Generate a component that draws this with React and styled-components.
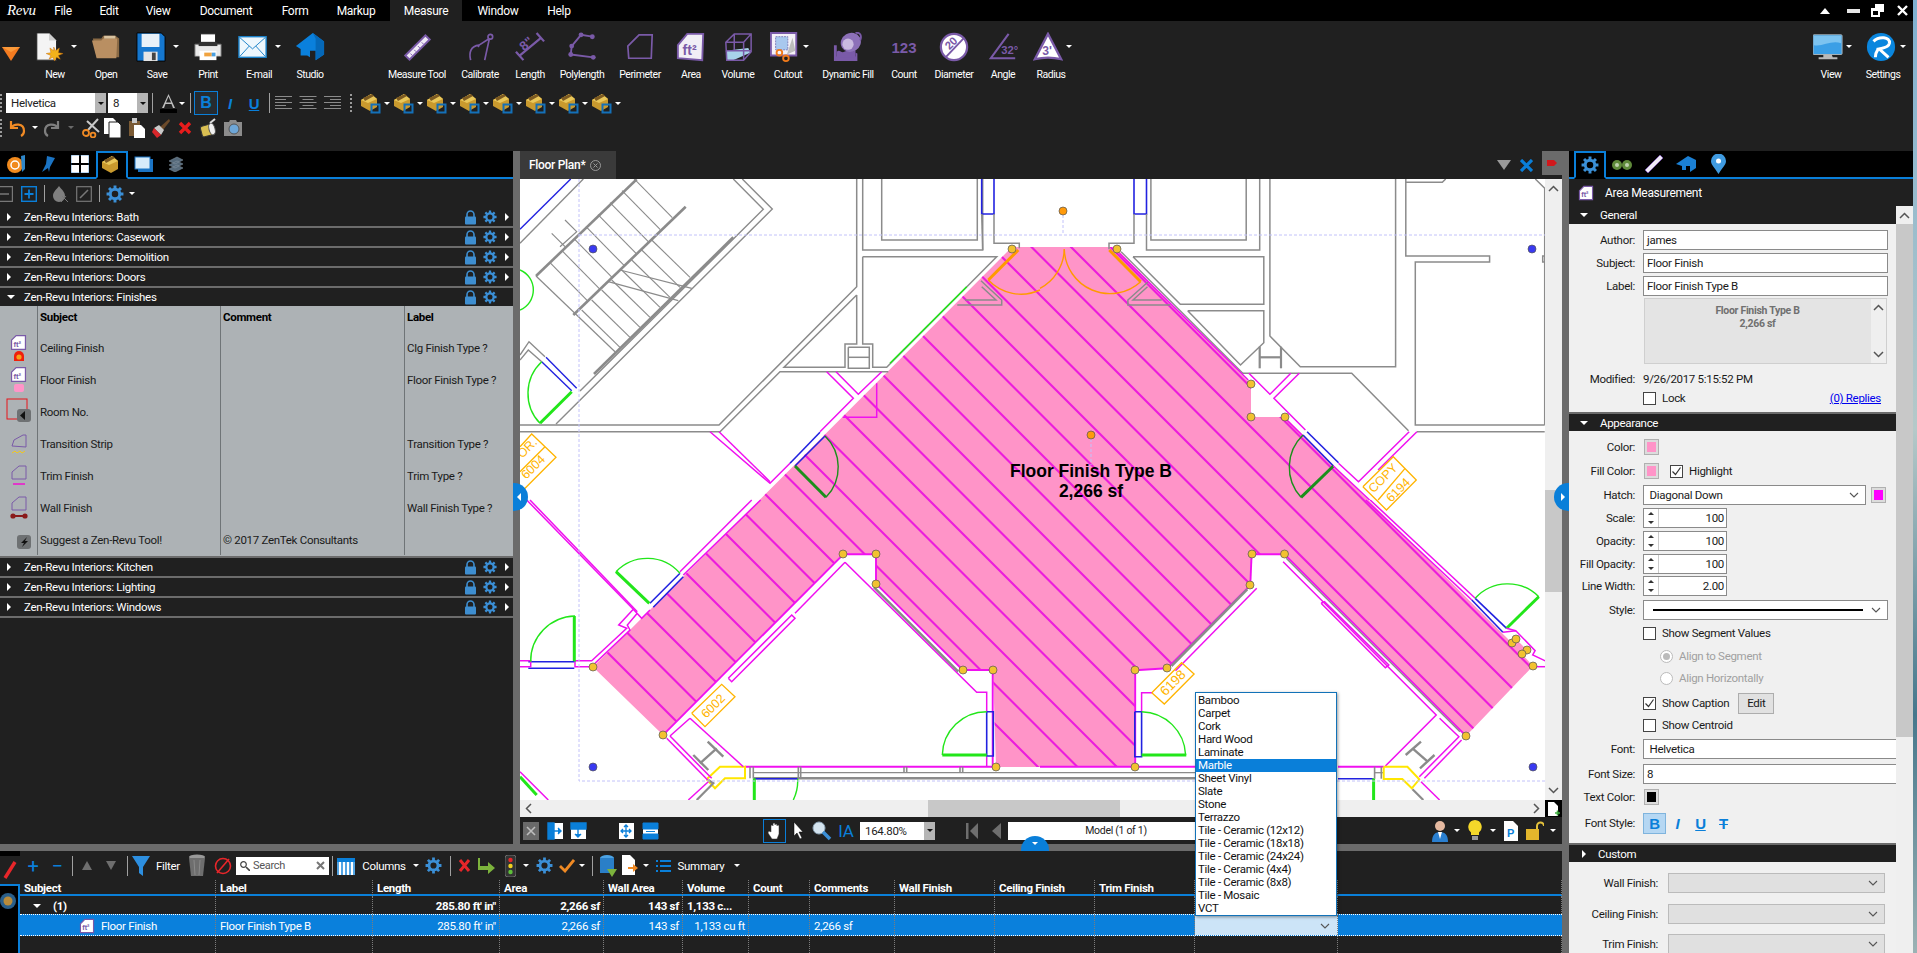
import React from "react";
import styled, { createGlobalStyle } from "styled-components";

const BLUE = "#0a7fd9";
const PURPLE = "#7a5aa8";
const DARK = "#202020";

const GlobalStyle = createGlobalStyle`
  html, body { margin: 0; padding: 0; overflow: hidden; background: #8fb6c9; }
  * { box-sizing: border-box; }
  body { font-family: Roboto, "Liberation Sans", sans-serif; font-size: 11.5px; letter-spacing: -0.3px; }
  svg text { letter-spacing: 0; }
`;

/* ---------- icons ---------- */
const Svg = ({ s, h, vb, children }) => (
  <svg
    width={s || 30}
    height={h || s || 30}
    viewBox={vb || (s ? `0 0 ${s} ${h || s}` : "0 0 32 32")}
    style={{ display: "block", flex: "none" }}
  >
    {children}
  </svg>
);

const Gear = ({ s = 16, c = "#3b8fd6" }) => (
  <Svg s={s} vb="0 0 16 16">
    <circle cx="8" cy="8" r="4.2" fill="none" stroke={c} strokeWidth="2.6" />
    <g stroke={c} strokeWidth="2.6">
      <path d="M8 0.5v3M8 12.5v3M0.5 8h3M12.5 8h3M2.7 2.7l2.1 2.1M11.2 11.2l2.1 2.1M2.7 13.3l2.1-2.1M11.2 4.8l2.1-2.1" />
    </g>
  </Svg>
);
const Lock = () => (
  <Svg s={13} h={15} vb="0 0 13 15">
    <path d="M3 7V4.5a3.5 3.5 0 0 1 7 0V7" fill="none" stroke="#3e8ed0" strokeWidth="1.6" />
    <rect x="1" y="6.5" width="11" height="8" rx="1" fill="#3e8ed0" />
  </Svg>
);
const Chest = ({ square = true }) => (
  <Svg s={22} h={22} vb="0 0 22 22">
    <path d="M1 8l10-6 6 5v8l-7 4-9-5z" fill="#c99a2e" />
    <path d="M1 8l10-6 6 5-9 4z" fill="#e9c75a" />
    <path d="M3 6l9-4 2 2-9 5z" fill="#7c5a22" />
    {square && <rect x="11.5" y="12.5" width="8" height="8" fill="none" stroke="#1470b8" strokeWidth="2" />}
  </Svg>
);
const Chevron = ({ c = "#555" }) => (
  <Svg s={10} h={6} vb="0 0 10 6">
    <path d="M1 1l4 4 4-4" fill="none" stroke={c} strokeWidth="1.1" />
  </Svg>
);
const FtIcon = ({ s = 20 }) => (
  <Svg s={s} vb="0 0 22 22">
    <path d="M2 8l6-6h12v18H2z" fill="#fff" stroke={PURPLE} strokeWidth="1.6" />
    <text x="4.5" y="17" fontSize="10" fontWeight="700" fill={PURPLE} fontFamily="Liberation Sans">ft²</text>
  </Svg>
);

const ribbonIcons = {
  New: (
    <Svg>
      <path d="M3 1h13l8 8v21H3z" fill="#f4f4f4" stroke="#222" />
      <path d="M16 1l8 8h-8z" fill="#cfcfcf" />
      <path d="M21 16l2 4 4-3-1 5 5 1-5 2 2 4-4-2-2 4-2-4-4 2 2-4-5-2 5-1-1-5 4 3z" fill="#f4b21a" stroke="#c86c08" strokeWidth=".5" />
    </Svg>
  ),
  Open: (
    <Svg>
      <path d="M2 7h9l2-3h13l4 3v20H6z" fill="#8a6a45" />
      <path d="M1 9h10l2-2h15l-1 21H6z" fill="#b98f62" />
      <path d="M14 4h12v3H14z" fill="#d9c3a0" />
    </Svg>
  ),
  Save: (
    <Svg>
      <path d="M1 1h26l4 4v26H1z" fill="#1577cf" stroke="#000" />
      <rect x="6" y="2" width="19" height="14" fill="#e9f1f8" />
      <rect x="8" y="21" width="15" height="10" fill="#e6e6e6" />
      <rect x="17" y="22" width="4" height="8" fill="#444" />
    </Svg>
  ),
  Print: (
    <Svg>
      <rect x="8" y="2" width="16" height="9" fill="#fff" stroke="#222" />
      <path d="M2 13h28v13H2z" fill="#e9e9e9" stroke="#666" />
      <rect x="6" y="11" width="20" height="4" fill="#333" />
      <rect x="7" y="20" width="18" height="10" fill="#fff" />
      <rect x="12" y="22" width="8" height="4" fill="#f0a340" />
      <rect x="20" y="22" width="4" height="4" fill="#4a9fe0" />
    </Svg>
  ),
  "E-mail": (
    <Svg>
      <rect x="1" y="5" width="29" height="22" fill="#eef7fd" stroke="#1a80c8" strokeWidth="1.5" />
      <path d="M2 6l13.5 12L29 6M2 26l10-11M29 26L19 15" fill="none" stroke="#1a80c8" />
    </Svg>
  ),
  Studio: (
    <Svg>
      <path d="M1 15L19 1l12 9v14l-9 6V20h-6v7l-3-2H6v-7z" fill="#0a80dc" />
      <path d="M19 1l12 9v14l-9 6V7z" fill="#0568b8" />
    </Svg>
  ),
  "Measure Tool": (
    <Svg>
      <path d="M2 25L25 2l6 6L8 31z" fill={PURPLE} />
      <path d="M5 25L25 5l3 3L8 28z" fill="#efeaf6" />
      <path d="M9 23l2 2M13 19l2 2M17 15l2 2M21 11l2 2" stroke={PURPLE} />
    </Svg>
  ),
  Calibrate: (
    <Svg>
      <g fill="none" stroke={PURPLE} strokeWidth="1.8">
        <circle cx="27" cy="5" r="2.5" />
        <path d="M26 7L15 14M26 7l-5 23M15 14C6 15 4 22 6 30M15 14l-1 2" />
      </g>
    </Svg>
  ),
  Length: (
    <Svg>
      <g stroke={PURPLE} strokeWidth="2.4" fill="none">
        <path d="M4 26L28 6M1 21l8 9M23 1l8 9" />
      </g>
      <text x="6" y="17" fontSize="14" fontWeight="700" fill={PURPLE} transform="rotate(-40 13 14)" fontFamily="Liberation Sans">8"</text>
    </Svg>
  ),
  Polylength: (
    <Svg>
      <path d="M4 24L5 15 15 3 27 5M4 24l24 3M27 5l1 0" fill="none" stroke={PURPLE} strokeWidth="2" />
      <g fill={PURPLE}>
        <circle cx="15" cy="3" r="2.6" /><circle cx="27" cy="5" r="2.6" /><circle cx="5" cy="15" r="2.6" />
        <circle cx="4" cy="24" r="2.6" /><circle cx="28" cy="27" r="2.6" />
      </g>
    </Svg>
  ),
  Perimeter: (
    <Svg>
      <path d="M3 15L15 3h14l-1 25H4z" fill="none" stroke={PURPLE} strokeWidth="1.8" />
    </Svg>
  ),
  Area: (
    <Svg>
      <path d="M2 14L12 2h17l-1 28L2 28z" fill="#f1eef6" stroke={PURPLE} strokeWidth="2" />
      <text x="7" y="25" fontSize="15" fontWeight="700" fill={PURPLE} fontFamily="Liberation Sans">ft²</text>
    </Svg>
  ),
  Volume: (
    <Svg>
      <path d="M3 20l24-3 2 5-20 9-5-1z" fill="#a8d3ea" />
      <path d="M3 11L12 2h18v19l-8 9H4zM3 11h19v19M22 11l8-9M12 2v18H4M12 20h18" fill="none" stroke={PURPLE} strokeWidth="1.6" />
    </Svg>
  ),
  Cutout: (
    <Svg>
      <path d="M1 1h27v24H1z" fill="#f4f1f8" stroke={PURPLE} strokeWidth="2" />
      <rect x="6" y="5" width="13" height="14" fill="#a8c8ee" stroke="#7a7ab8" strokeDasharray="2 1" />
      <path d="M18 24l6-18 3 14z" fill="#bdbdbd" />
      <circle cx="10" cy="22" r="3" fill="none" stroke="#f07a1a" strokeWidth="2" />
      <circle cx="17" cy="28" r="3" fill="none" stroke="#f07a1a" strokeWidth="2" />
    </Svg>
  ),
  "Dynamic Fill": (
    <Svg>
      <path d="M1 14h3v12h20v-4l2 1v8H1z" fill={PURPLE} />
      <path d="M4 21c3-3 5 2 8 0s5 1 12-1v7H4z" fill={PURPLE} />
      <ellipse cx="19" cy="11" rx="11" ry="10" fill="#8c70b8" transform="rotate(-30 19 11)" />
      <ellipse cx="16" cy="13" rx="6" ry="6" fill="#c9badf" />
      <path d="M24 1c5-1 7 3 5 8" fill="none" stroke={PURPLE} strokeWidth="2" />
    </Svg>
  ),
  Count: (
    <Svg>
      <text x="16" y="22" textAnchor="middle" fontSize="16" fontWeight="700" letterSpacing="1.5" fill={PURPLE} fontFamily="Liberation Sans">123</text>
    </Svg>
  ),
  Diameter: (
    <Svg>
      <circle cx="16" cy="16" r="14" fill="#fff" stroke={PURPLE} strokeWidth="2.4" />
      <path d="M7 27L27 6" stroke={PURPLE} strokeWidth="2" />
      <text x="13" y="16" textAnchor="middle" fontSize="12" fontWeight="700" fill={PURPLE} transform="rotate(-45 13 12)" fontFamily="Liberation Sans">20</text>
    </Svg>
  ),
  Angle: (
    <Svg>
      <path d="M22 2L3 28h26" fill="none" stroke={PURPLE} strokeWidth="2.2" />
      <text x="14" y="23" fontSize="12" fontWeight="700" fill={PURPLE} fontFamily="Liberation Sans">32°</text>
    </Svg>
  ),
  Radius: (
    <Svg>
      <path d="M16 2L2 29c8-2 20-2 28 0z" fill="#fff" stroke={PURPLE} strokeWidth="2.4" />
      <text x="15" y="24" textAnchor="middle" fontSize="13" fontWeight="700" fill={PURPLE} fontFamily="Liberation Sans">3'</text>
    </Svg>
  ),
  View: (
    <Svg>
      <rect x="0" y="3" width="31" height="21" rx="1" fill="#3b9fe6" stroke="#aeb6bb" />
      <path d="M1 4h29v8C20 8 10 16 1 14z" fill="#7cc3f0" />
      <path d="M11 24h9l1 3h5v2H6v-2h5z" fill="#b9b9b9" />
    </Svg>
  ),
  Settings: (
    <Svg>
      <circle cx="16" cy="16" r="15" fill="#0a86de" />
      <path d="M8 10c6-6 18-5 17 2-1 5-7 5-11 6l10 9M13 18c-2 3-3 5-3 9" fill="none" stroke="#fff" strokeWidth="3.2" />
    </Svg>
  ),
};

/* ---------- canvas data ---------- */
const ZONES = { a: [520, 150, 3], b: [1040, 150, 2.958], c: [520, 500, 3], d: [1040, 500, 2.953] };
const map = (zone, arr) => {
  const [ox, oy, sx] = ZONES[zone];
  const out = [];
  for (let i = 0; i < arr.length; i += 2) out.push(`${(ox + arr[i] / sx).toFixed(1)},${(oy + arr[i + 1] / 3).toFixed(1)}`);
  return out.join(" ");
};

const G = "#8b8b8b", M = "#f010f0", B = "#2222e0", GR = "#22e61a", DG = "#1b8f1b", Y = "#ffe600", O = "#ff9a00", L = "#ffb400";

const LINES = [
  // stair + core, left
  [B, 1.4, "a", 0, 238, 152, 87], [G, 1.4, "a", 0, 280, 190, 87],
  [G, 2.6, "a", 48, 378, 350, 88], [G, 2.6, "a", 160, 495, 497, 170], [G, 2.6, "a", 222, 672, 640, 262],
  [G, 1.2, "a", 48, 378, 285, 605], [G, 1.4, "a", 667, 87, 757, 177, 108, 822], [G, 1.4, "a", 640, 87, 730, 178, 180, 723],
  [G, 1.2, "a", 300, 360, 515, 415], [G, 1.2, "a", 265, 395, 475, 452], [G, 1.2, "a", 135, 210, 170, 245, 120, 290], [G, 1.2, "a", 95, 250, 135, 290],
  [G, 1.4, "a", 0, 615, 27, 575, 75, 620], [G, 1.4, "a", 0, 630, 25, 600, 65, 635],
  [B, 1.4, "a", 78, 622, 170, 715], [B, 1.4, "a", 65, 635, 155, 722],
  [GR, 3, "a", 155, 725, 60, 820],
  [G, 1.5, "a", 0, 825, 597, 825, 1010, 410, 1010, 87],
  [G, 1.5, "a", 0, 845, 600, 845, 780, 665, 1105, 665],
  [G, 1.5, "a", 1010, 435, 792, 652, 975, 652, 975, 582, 1010, 582, 1010, 435],
  [G, 1.5, "a", 985, 592, 985, 655, 1048, 655, 1048, 592, 985, 592], [G, 1.5, "a", 985, 622, 1048, 622],
  [G, 1.5, "a", 1028, 87, 1028, 300, 1388, 300, 1388, 87], [G, 1.5, "a", 1085, 87, 1085, 270, 1372, 270, 1372, 87],
  [G, 1.5, "a", 1028, 320, 1430, 320, 1100, 652, 1058, 652, 1058, 582, 1028, 582, 1028, 320],
  [B, 1.6, "a", 1385, 87, 1385, 192, 1422, 192, 1422, 87], [G, 1.5, "a", 1422, 192, 1422, 280, 1498, 280, 1498, 295],
  [G, 1.5, "a", 1385, 192, 1388, 300],
  [GR, 1.6, "a", 1110, 640, 1340, 410],
  [G, 1.5, "a", 1383, 392, 1445, 450, 1445, 465, 1312, 465], [G, 1.5, "a", 1385, 410, 1428, 450, 1335, 450],
  [M, 1.5, "a", 920, 665, 1000, 745, 900, 845], [M, 1.5, "a", 948, 665, 1015, 733, 1085, 665],
  [M, 1.5, "a", 570, 845, 750, 1000, 810, 940], [M, 1.5, "a", 597, 845, 750, 995],
  [M, 1.5, "a", 968, 802, 1070, 802, 1070, 700],
  [B, 1.6, "a", 810, 940, 900, 847], [B, 1.6, "a", 825, 948, 915, 858],
  [DG, 3, "a", 825, 948, 918, 1042],
  // right of center
  [B, 1.6, "b", 278, 87, 278, 192, 315, 192, 315, 87],
  [G, 1.5, "b", 278, 192, 278, 280, 204, 280, 204, 298], [G, 1.5, "b", 315, 192, 315, 300, 650, 300, 650, 87],
  [G, 1.5, "b", 328, 87, 328, 270, 610, 270, 610, 87], [G, 1.5, "b", 680, 87, 680, 558, 770, 650, 1052, 650, 1052, 87],
  [G, 1.5, "b", 275, 320, 662, 320, 662, 463, 415, 463, 275, 320], [G, 1.5, "b", 437, 482, 662, 482, 662, 578, 593, 645, 437, 482],
  [G, 2.2, "b", 650, 590, 650, 655], [G, 2.2, "b", 713, 590, 713, 655], [G, 2.2, "b", 650, 622, 713, 622],
  [G, 1.5, "b", 598, 670, 922, 670, 1090, 842], [G, 1.5, "b", 1115, 845, 1493, 845],
  [G, 1.5, "b", 1082, 87, 1082, 318, 1330, 318, 1330, 336, 1110, 336, 1110, 825, 1493, 825],
  [G, 1.5, "b", 1082, 97, 1190, 97, 1200, 87], [G, 1.5, "b", 1465, 87, 1493, 115, 1493, 825],
  [G, 1.5, "b", 1493, 318, 1487, 318, 1487, 336, 1493, 336],
  [G, 1.5, "b", 320, 395, 260, 450, 260, 465, 385, 465], [G, 1.5, "b", 318, 410, 275, 450, 360, 450],
  [G, 1.3, "b", 240, 305, 600, 670],
  [M, 1.5, "b", 618, 670, 680, 733, 742, 670], [M, 1.5, "b", 767, 670, 692, 745, 785, 840],
  [M, 1.5, "b", 235, 310, 616, 690], [M, 1.5, "b", 730, 810, 778, 858],
  [B, 1.6, "b", 790, 845, 883, 938], [B, 1.6, "b", 778, 855, 868, 948], [DG, 3, "b", 868, 948, 772, 1042],
  [M, 1.5, "b", 883, 940, 942, 995, 1092, 845], [M, 1.5, "b", 1115, 845, 1000, 960], [M, 1.5, "b", 868, 948, 975, 1050],
  [O, 3, "b", 205, 300, 298, 395], [O, 3, "a", 1495, 300, 1405, 390],
  // lower band
  [M, 1.5, "d", 962, 0, 1275, 300], [M, 1.5, "d", 975, 0, 1285, 295],
  [B, 1.6, "d", 1275, 300, 1367, 397], [B, 1.6, "d", 1285, 295, 1378, 385], [GR, 3, "d", 1473, 290, 1378, 385],
  [M, 1.5, "d", 1367, 397, 1405, 392, 1462, 452, 1455, 465, 1493, 483], [M, 1.5, "d", 1378, 385, 1405, 392], [M, 1.5, "d", 1462, 500, 1493, 500],
  [M, 1.5, "d", 718, 185, 1170, 645, 1020, 798], [M, 1.9, "d", 722, 163, 1257, 707],
  [G, 1.3, "d", 727, 175, 1240, 695],
  [M, 1.5, "d", 1180, 655, 1237, 710, 1120, 830], [M, 1.5, "d", 1245, 720, 1135, 835],
  [M, 1.5, "d", 830, 310, 1020, 503, 1030, 495, 840, 305, 830, 310],
  [M, 1.9, "d", 625, 163, 722, 163], [M, 1.9, "d", 625, 163, 621, 256], [M, 1.9, "d", 281, 511, 375, 505], [M, 1.9, "d", 281, 511, 281, 800],
  [M, 1.9, "d", 621, 256, 375, 505],
  [G, 2.6, "d", 612, 268, 388, 498], [M, 1.5, "d", 640, 265, 400, 512],
  [M, 1.5, "d", 300, 635, 300, 578, 332, 578], [B, 1.6, "d", 280, 635, 280, 770, 300, 770, 300, 635, 280, 635],
  [GR, 3, "d", 300, 765, 432, 765],
  [M, 2, "d", 0, 800, 460, 800], [M, 2, "d", 880, 800, 1015, 800], [G, 1.3, "d", 0, 818, 460, 818], [G, 2.6, "d", 0, 835, 460, 835],
  [B, 1.6, "d", 880, 836, 985, 836], [GR, 3, "d", 985, 835, 985, 900],
  [G, 1.6, "d", 988, 800, 988, 836], [G, 1.6, "d", 1008, 800, 1008, 836], [G, 1.3, "d", 988, 818, 1015, 818],
  [Y, 2, "d", 1015, 800, 1085, 800, 1120, 838, 1098, 865, 1070, 837, 1015, 837, 1015, 800],
  [G, 2.2, "d", 1100, 868, 1132, 900], [M, 1.5, "d", 1125, 845, 1180, 900],
  [G, 2.4, "d", 1080, 765, 1125, 725], [G, 2.4, "d", 1122, 805, 1165, 765], [G, 2.4, "d", 1100, 745, 1145, 785],
  // lower left
  [M, 1.5, "c", 20, 0, 340, 328, 296, 375, 320, 385, 215, 482, 165, 482, 165, 500, 215, 500],
  [M, 1.5, "c", 30, 0, 352, 335],
  [M, 1.5, "c", 340, 328, 365, 355, 390, 330], [M, 1.5, "c", 352, 340, 322, 375, 330, 390, 225, 490],
  [M, 1.5, "c", 480, 215, 695, 0], [M, 1.5, "c", 490, 225, 722, 0],
  [B, 1.6, "c", 390, 310, 480, 220], [B, 1.6, "c", 400, 322, 490, 230], [GR, 3, "c", 288, 215, 388, 310],
  [GR, 3, "c", 163, 348, 163, 485], [B, 1.6, "c", 25, 485, 163, 485], [B, 1.6, "c", 25, 505, 163, 505],
  [M, 1.5, "c", 0, 482, 32, 482, 32, 500, 0, 500],
  [M, 2, "c", 675, 800, 1430, 800], [G, 1.3, "c", 700, 818, 1560, 818], [G, 2.6, "c", 700, 835, 1560, 835],
  [B, 1.6, "c", 703, 836, 833, 836], [GR, 3, "c", 703, 835, 703, 900],
  [G, 1.6, "c", 690, 800, 690, 835], [G, 1.6, "c", 700, 800, 700, 835], [G, 1.6, "c", 835, 800, 835, 835], [G, 1.6, "c", 842, 800, 842, 835],
  [G, 1.6, "c", 1152, 800, 1152, 818], [G, 1.6, "c", 1160, 800, 1160, 818], [G, 1.6, "c", 1320, 800, 1320, 818], [G, 1.6, "c", 1328, 800, 1328, 818],
  [Y, 2, "c", 560, 838, 600, 800, 675, 800, 675, 835, 615, 835, 585, 865, 560, 838],
  [M, 1.5, "c", 510, 655, 670, 800], [M, 1.5, "c", 450, 708, 510, 655], [M, 1.5, "c", 450, 708, 575, 835], [M, 1.5, "c", 440, 715, 563, 840],
  [G, 2.4, "c", 520, 765, 565, 810], [G, 2.4, "c", 563, 725, 610, 770], [G, 2.4, "c", 540, 790, 590, 745],
  [M, 1.5, "c", 505, 900, 565, 845], [G, 2.2, "c", 530, 900, 580, 850, 565, 840],
  [M, 1.5, "c", 0, 815, 85, 900], [GR, 3, "c", 0, 830, 50, 885],
  [M, 1.5, "c", 625, 535, 815, 345, 825, 355, 635, 545, 625, 535],
  [M, 1.9, "c", 970, 163, 1068, 163, 1068, 251, 1328, 510, 1418, 510, 1418, 800],
  [M, 1.9, "c", 970, 163, 428, 706], [M, 1.5, "c", 975, 187, 825, 340], [M, 1.5, "c", 975, 187, 1370, 577, 1400, 577, 1400, 635],
  [M, 1.5, "c", 1400, 770, 1400, 800],
  [G, 2.4, "c", 1062, 262, 1315, 515],
  [B, 1.6, "c", 1400, 635, 1420, 635, 1420, 768, 1400, 768, 1400, 635], [GR, 3, "c", 1267, 765, 1400, 765],
  [L, 1.3, "c", 515, 640, 605, 553, 645, 590, 555, 680, 515, 640],
  [L, 1.3, "a", 0, 890, 35, 852, 108, 922, 10, 1020, 0, 1010], [L, 1.3, "a", 0, 965, 75, 890],
  [L, 1.3, "b", 955, 1010, 1045, 920, 1113, 990, 1025, 1080, 955, 1010], [L, 1.3, "b", 1000, 1050, 1080, 955],
  [L, 1.3, "d", 330, 578, 418, 488, 455, 522, 367, 612, 330, 578],
];

const ARCS = [
  [GR, "a", 65, 635, 130, 0, 60, 820], [GR, "a", 0, 360, 65, 1, 0, 480],
  [DG, "a", 915, 858, 130, 1, 918, 1042], [DG, "b", 778, 855, 132, 0, 772, 1042],
  [GR, "c", 480, 220, 130, 0, 288, 215], [GR, "c", 32, 485, 135, 1, 165, 348], [GR, "c", 1400, 635, 133, 0, 1267, 765],
  [GR, "c", 833, 836, 133, 1, 820, 900],
  [GR, "d", 300, 635, 133, 1, 430, 765], [GR, "d", 1285, 295, 130, 1, 1473, 290],
  [O, "a", 1405, 390, 135, 0, 1560, 420], [O, "b", 72, 298, 135, 0, 298, 395], [O, "b", 72, 298, 135, 1, 0, 415],
];

const POLY = "1012,247 1113,247 1117,249 1251,384 1251,417 1285,417 1512,643 1516,639 1527,650 1522,654 1533,666 1466,736 1284.5,554 1252,554 1250,585 1167,668 1135,670 1135,767 996,767 993,670 963,670 876,584 876,554 843,554 663,735 593,667";
const HANDLES = [
  [1012, 249], [1117, 249], [1251, 384], [1251, 417], [1285, 417], [1533, 666], [1512, 643], [1516, 639], [1527, 650], [1522, 654],
  [1466, 736], [1284.5, 554], [1252, 554], [1250, 585], [1167, 668], [1135, 670], [1135, 767], [996, 767], [993, 670], [963, 670],
  [876, 584], [876, 554], [843, 554], [663, 735], [593, 667],
];

const hatch = Array.from({ length: 26 }, (_, k) => -84.5 + 39.5 * k);
const stairTreads = Array.from({ length: 8 }, (_, k) => k);

const FloorPlan = () => (
  <svg width="1025" height="621" viewBox="520 179 1025 621" style={{ display: "block" }}>
    <defs>
      <clipPath id="area"><polygon points={POLY} /></clipPath>
    </defs>
    <rect x="520" y="179" width="1025" height="621" fill="#fff" />
    <polygon points={POLY} fill="#ff94c8" />
    <g clipPath="url(#area)" stroke="#ec1cdc" strokeWidth="2.1">
      {hatch.map((c) => <line key={c} x1={c + 240} y1="240" x2={c + 780} y2="780" />)}
    </g>
    <g stroke={G} strokeWidth="1.1">
      {stairTreads.map((k) => (
        <React.Fragment key={k}>
          <polyline fill="none" points={map("a", [90 + k * 36, 338 - k * 36, 205 + k * 36, 455 - k * 36])} />
          <polyline fill="none" points={map("a", [185 + k * 30, 480 - k * 30, 300 + k * 30, 592 - k * 30])} />
        </React.Fragment>
      ))}
    </g>
    <g fill="none" strokeLinejoin="miter">
      {LINES.map(([c, w, z, ...pts], i) => <polyline key={i} points={map(z, pts)} stroke={c} strokeWidth={w} />)}
      {ARCS.map(([c, z, x1, y1, r, sweep, x2, y2], i) => {
        const [ax, ay] = map(z, [x1, y1]).split(",");
        const [bx, by] = map(z, [x2, y2]).split(",");
        const rr = r / ZONES[z][2];
        return <path key={i} d={`M${ax} ${ay}A${rr} ${rr} 0 0 ${sweep} ${bx} ${by}`} stroke={c} strokeWidth="1.4" />;
      })}
    </g>
    <g fill="none" stroke="#c2c2fa" strokeWidth="1" strokeDasharray="3 2">
      <path d="M579 235H1545M579 179V781H1545M1063 215V235M1091 439V465" />
    </g>
    <g stroke="#555" strokeWidth=".7">
      {HANDLES.map(([x, y], i) => <circle key={i} cx={x} cy={y} r="4" fill="#f2c230" />)}
      <circle cx="1063" cy="211" r="4" fill="#ff9a0a" />
      <circle cx="1091" cy="435" r="4" fill="#ff9a0a" />
      {[[593, 249], [1532, 249], [593, 767], [1533, 767]].map(([x, y]) => <circle key={x + "," + y} cx={x} cy={y} r="4" fill="#3a3af0" />)}
    </g>
    <g fontFamily="Liberation Sans" fill={L} fontSize="12.5" textAnchor="middle">
      <text transform="translate(716 709) rotate(-45)">6002</text>
      <text transform="translate(1176 686) rotate(-45)" fontSize="13.5">6198</text>
      <text transform="translate(1386 481) rotate(-45)">COPY</text>
      <text transform="translate(1401 493) rotate(-45)">6194</text>
      <text transform="translate(530 451) rotate(-45)">OR.</text>
      <text transform="translate(536 470) rotate(-45)">6004</text>
    </g>
    <g fontFamily="Liberation Sans" fontWeight="700" fontSize="17.5" textAnchor="middle" fill="#000">
      <text x="1091" y="477">Floor Finish Type B</text>
      <text x="1091" y="497">2,266 sf</text>
    </g>
  </svg>
);

/* ---------- layout ---------- */
const Page = styled.div`
  width: 1917px;
  height: 953px;
  display: flex;
  background: linear-gradient(#7fb0d0, #b5c9c9 45%, #46778c 75%, #9cb2b4);
`;
const AppWindow = styled.div`
  width: 1913px;
  height: 953px;
  display: flex;
  flex-direction: column;
  color: #fff;
  background: ${DARK};
`;
const MenuBar = styled.div`
  height: 21px;
  background: #000;
  display: flex;
  align-items: center;
`;
const Logo = styled.span`
  width: 40px;
  padding-left: 7px;
  font: italic 15px "Liberation Serif", serif;
  color: #fff;
`;
const MenuItem = styled.div`
  height: 21px;
  display: flex;
  align-items: center;
  justify-content: center;
  width: ${(p) => p.$w}px;
  font-size: 12px;
  background: ${(p) => (p.$active ? DARK : "transparent")};
`;
const WindowControls = styled.div`
  margin-left: auto;
  display: flex;
  align-items: center;
  padding-right: 5px;
`;
const Ribbon = styled.div`
  height: 130px;
  padding-top: 11px;
  display: flex;
  flex-direction: column;
`;
const RibbonRow = styled.div`
  display: flex;
  height: 52px;
`;
const RibbonLead = styled.div`
  width: 29.5px;
  padding: 15px 0 0 2px;
`;
const RibbonGap = styled.div`
  width: ${(p) => p.$w}px;
`;
const RibbonTool = styled.div`
  position: relative;
  width: ${(p) => p.$w}px;
  display: flex;
  flex-direction: column;
  align-items: center;
`;
const RibbonIcon = styled.div`
  margin-right: ${(p) => (p.$shift || 0) * 2}px;
`;
const RibbonLabel = styled.div`
  margin-top: 6px;
  font-size: 10.5px;
  letter-spacing: -0.45px;
  white-space: nowrap;
  color: #fff;
`;
const RibbonSpring = styled.div`
  flex: 1;
`;
const Caret = styled.span`
  position: absolute;
  left: calc(50% + ${(p) => p.$x}px);
  top: 13px;
  border-left: 3px solid transparent;
  border-right: 3px solid transparent;
  border-top: 3px solid #fff;
`;
const ToolRow = styled.div`
  display: flex;
  align-items: center;
  flex: none;
  height: ${(p) => p.$h || 25}px;
  margin-top: ${(p) => p.$mt || 0}px;
`;
const Slot = styled.div`
  width: ${(p) => p.$w}px;
  height: 100%;
  flex: none;
  display: flex;
  align-items: center;
  justify-content: center;
  gap: 2px;
  color: ${(p) => p.$c || "#fff"};
  font-size: ${(p) => (p.$fs ? `${p.$fs}px` : "inherit")};
  white-space: nowrap;
`;
const MiniCaret = styled.span`
  border-left: 3px solid transparent;
  border-right: 3px solid transparent;
  border-top: 3px solid ${(p) => p.$c || "#fff"};
  flex: none;
`;
const Grip = styled.div`
  width: ${(p) => p.$w || 6}px;
  height: 18px;
  flex: none;
  display: flex;
  justify-content: ${(p) => (p.$center ? "center" : "flex-start")};
  &::before {
    content: "";
    width: 2px;
    height: 100%;
    background: repeating-linear-gradient(#9a9a9a 0 2px, transparent 2px 4px);
  }
`;
const Sep = styled.div`
  width: ${(p) => p.$w || 7}px;
  height: ${(p) => p.$h || 20}px;
  flex: none;
  display: flex;
  justify-content: center;
  &::before {
    content: "";
    width: 1px;
    height: 100%;
    background: #a0a0a0;
  }
`;
const Combo = styled.div`
  width: ${(p) => p.$w}px;
  height: ${(p) => p.$h || 20}px;
  flex: none;
  margin-left: ${(p) => p.$ml || 0}px;
  background: #fff;
  color: #222;
  display: flex;
  align-items: center;
  justify-content: space-between;
  padding-left: 5px;
  font-size: 11.5px;
`;
const ComboButton = styled.span`
  width: 11px;
  height: 100%;
  background: #b5b5b5;
  display: flex;
  align-items: center;
  justify-content: center;
  &::before {
    content: "";
    border-left: 3px solid transparent;
    border-right: 3px solid transparent;
    border-top: 3px solid #111;
  }
`;
const BoldButton = styled.div`
  width: 24px;
  height: 24px;
  flex: none;
  display: flex;
  align-items: center;
  justify-content: center;
  border: 1px solid ${BLUE};
  background: #262b30;
  color: ${BLUE};
  font: 700 16px "Liberation Sans", sans-serif;
`;
const StyleGlyph = styled.span`
  color: ${BLUE};
  font: ${(p) => (p.$italic ? "italic 700" : "700")} 15px "Liberation Sans", sans-serif;
  text-decoration: ${(p) => (p.$underline ? "underline" : p.$strike ? "line-through" : "none")};
`;

const Workspace = styled.div`
  flex: 1;
  display: flex;
  min-height: 0;
`;
const MainColumn = styled.div`
  width: 1569px;
  display: flex;
  flex-direction: column;
`;
const TopArea = styled.div`
  height: 693px;
  display: flex;
`;
const LeftPanel = styled.div`
  width: 513px;
  display: flex;
  flex-direction: column;
`;
const PanelTabs = styled.div`
  height: 28px;
  flex: none;
  background: #000;
  border-bottom: 2px solid ${BLUE};
  display: flex;
  padding-left: ${(p) => p.$pad || 0}px;
`;
const PanelTab = styled.div`
  width: ${(p) => p.$w || 32}px;
  display: flex;
  align-items: center;
  justify-content: center;
  ${(p) =>
    p.$active &&
    `border: 2px solid ${BLUE}; border-bottom: 2px solid #000; margin-bottom: -2px;`}
`;
const SetRow = styled.div`
  display: flex;
  align-items: center;
  flex: none;
  border-bottom: ${(p) => (p.$open ? "none" : "2px solid #6c6c6c")};
  font-size: 11.5px;
  height: ${(p) => (p.$open ? 18 : 20)}px;
`;
const Arrow = styled.span`
  flex: none;
  width: 0;
  height: 0;
  ${(p) =>
    p.$down
      ? "border-left: 4px solid transparent; border-right: 4px solid transparent; border-top: 4px solid #fff;"
      : "border-top: 4px solid transparent; border-bottom: 4px solid transparent; border-left: 4px solid #fff;"}
  margin-left: ${(p) => p.$ml ?? 7}px;
`;
const SetName = styled.span`
  margin-left: ${(p) => (p.$down ? 9 : 13)}px;
  flex: 1;
`;
const SetIcons = styled.div`
  display: flex;
  align-items: center;
  width: 49px;
  gap: 6px;
`;
const SetTable = styled.div`
  height: 250px;
  background: #adb2b5;
  color: #1a1a1a;
  display: grid;
  grid-template-columns: 38px 183px 184px 1fr;
  grid-template-rows: 25px repeat(7, 32px);
  border-bottom: 1px solid #adb2b5;
  font-size: 11.5px;
`;
const SetCell = styled.div`
  display: flex;
  align-items: center;
  padding: ${(p) => (p.$head ? "0 0 4px 2px" : "1px 0 0 2px")};
  border-right: ${(p) => (p.$last ? "none" : "1px solid #6f7477")};
  font-weight: ${(p) => (p.$head ? 700 : 400)};
  color: ${(p) => (p.$head ? "#000" : "#1a1a1a")};
`;
const SetIconCell = styled(SetCell)`
  justify-content: center;
  flex-direction: column;
  padding: 0;
`;
const TableGap = styled.div`
  height: 2px;
  flex: none;
  background: #6c6c6c;
`;
const VSplit = styled.div`
  width: 7px;
  flex: none;
  background: #6b6b6b;
`;
const HSplit = styled.div`
  height: 7px;
  flex: none;
  background: #6b6b6b;
  position: relative;
`;
const EdgeKnob = styled.div`
  position: absolute;
  z-index: 4;
  top: 332px;
  ${(p) => (p.$right ? "right: -7px;" : "left: -7px;")}
  width: 15px;
  height: 28px;
  background: ${BLUE};
  border-radius: ${(p) => (p.$right ? "14px 0 0 14px" : "0 14px 14px 0")};
  &::after {
    content: "";
    position: absolute;
    top: 10px;
    left: ${(p) => (p.$right ? 7 : 4)}px;
    border-top: 4px solid transparent;
    border-bottom: 4px solid transparent;
    ${(p) => (p.$right ? "border-left: 4px solid #fff;" : "border-right: 4px solid #fff;")}
  }
`;
const DocArea = styled.div`
  position: relative;
  width: 1042px;
  display: flex;
  flex-direction: column;
`;
const DocTabs = styled.div`
  height: 28px;
  flex: none;
  display: flex;
  align-items: stretch;
`;
const DocTab = styled.div`
  width: 96px;
  background: #3a3a3a;
  display: flex;
  align-items: center;
  padding-left: 9px;
  gap: 5px;
  font-size: 12px;
  font-weight: 500;
`;
const DocActions = styled.div`
  margin-left: auto;
  display: flex;
  align-items: center;
  height: 100%;
`;
const RedBox = styled.div`
  width: 20px;
  height: 24px;
  margin-top: -4px;
  background: #6b6b6b;
  display: flex;
  align-items: center;
  justify-content: center;
`;
const CanvasRow = styled.div`
  height: 621px;
  flex: none;
  display: flex;
`;
const VScroll = styled.div`
  position: relative;
  width: 17px;
  background: #efefef;
`;
const ScrollThumb = styled.div`
  position: absolute;
  left: 0;
  right: 0;
  top: ${(p) => p.$top}px;
  height: ${(p) => p.$h}px;
  background: #c8c8c8;
`;
const ScrollArrow = styled.div`
  position: absolute;
  left: 3px;
  ${(p) => (p.$down ? "bottom: 6px;" : "top: 6px;")}
`;
const HScrollRow = styled.div`
  height: 17px;
  flex: none;
  display: flex;
`;
const HScroll = styled.div`
  position: relative;
  width: 1025px;
  background: #efefef;
  display: flex;
  align-items: center;
  justify-content: space-between;
  padding: 0 5px;
`;
const HThumb = styled.div`
  position: absolute;
  left: 408px;
  top: 0;
  bottom: 0;
  width: 192px;
  background: #c8c8c8;
`;
const PageCorner = styled.div`
  width: 17px;
  background: #000;
  display: flex;
  align-items: center;
  justify-content: center;
`;
const NavBar = styled.div`
  height: 27px;
  flex: none;
  display: flex;
  align-items: center;
`;
const NavGap = styled.div`
  width: ${(p) => p.$w}px;
  flex: none;
`;
const HandButton = styled.div`
  width: 23px;
  height: 24px;
  border: 1px solid ${BLUE};
  display: flex;
  align-items: center;
  justify-content: center;
  flex: none;
`;
const ModelBox = styled.div`
  width: 196px;
  height: 18px;
  flex: none;
  background: #fff;
  color: #222;
  font-size: 10.5px;
  padding-left: 20px;
  display: flex;
  align-items: center;
  justify-content: center;
`;
const Knob = styled.div`
  position: absolute;
  left: 1021px;
  top: -8px;
  width: 28px;
  height: 15px;
  background: ${BLUE};
  border-radius: 14px 14px 0 0;
  display: flex;
  align-items: center;
  justify-content: center;
`;

const ListPanel = styled.div`
  height: 102px;
  flex: none;
  display: flex;
`;
const ListStrip = styled.div`
  width: 20px;
  flex: none;
  display: flex;
  flex-direction: column;
`;
const StripTop = styled.div`
  height: 35px;
  border-top: 5px solid #000;
  border-bottom: 2px solid ${BLUE};
  display: flex;
  align-items: center;
  justify-content: center;
`;
const StripRest = styled.div`
  flex: 1;
  background: #000;
  border-right: 2px solid ${BLUE};
  padding-top: 7px;
`;
const ListMain = styled.div`
  width: 1542px;
  display: flex;
  flex-direction: column;
`;
const SearchBox = styled.div`
  width: 93px;
  height: 18px;
  flex: none;
  background: #fff;
  color: #555;
  display: flex;
  align-items: center;
  gap: 3px;
  padding: 0 4px;
  font-size: 11px;
  & > span {
    flex: 1;
  }
`;
const Row = styled.div`
  display: grid;
  grid-template-columns: 196px 157px 127px 104px 79px 66px 61px 85px 100px 100px 100px 143px 1fr;
  height: ${(p) => p.$h}px;
  flex: none;
  font-weight: ${(p) => (p.$bold ? 700 : 400)};
  ${(p) => p.$header && `border-bottom: 2px solid ${BLUE};`}
  ${(p) => p.$sel && `background: #0a80dc; border-top: 1px dotted #fff; border-bottom: 1px dotted #fff;`}
`;
const Cell = styled.div`
  position: relative;
  display: flex;
  align-items: center;
  justify-content: ${(p) => (p.$right ? "flex-end" : "flex-start")};
  padding: 1px 3px 0 ${(p) => p.$pl ?? 4}px;
  border-right: 1px dotted #7d7d7d;
  white-space: nowrap;
  overflow: ${(p) => (p.$open ? "visible" : "hidden")};
`;
const EditCell = styled(Cell)`
  background: #cce4f7;
  justify-content: flex-end;
  padding-right: 7px;
`;
const DropList = styled.div`
  position: absolute;
  left: 0;
  right: 0;
  bottom: 19px;
  z-index: 5;
  background: #fff;
  border: 1px solid #1272b8;
  box-shadow: 1px 1px 3px rgba(0, 0, 0, 0.4);
  color: #111;
  padding-top: 1px;
`;
const DropItem = styled.div`
  height: 13px;
  line-height: 13px;
  padding-left: 2px;
  font-size: 11.5px;
  font-weight: 400;
  background: ${(p) => (p.$sel ? BLUE : "transparent")};
  color: ${(p) => (p.$sel ? "#fff" : "#111")};
`;
const ListBody = styled.div`
  flex: 1;
`;

const RightPanel = styled.div`
  width: 344px;
  display: flex;
  flex-direction: column;
  position: relative;
`;
const PropTitle = styled.div`
  height: 27px;
  flex: none;
  display: flex;
  align-items: center;
  gap: 11px;
  padding-left: 9px;
  font-size: 12px;
`;
const PropScrollArea = styled.div`
  flex: 1;
  display: flex;
  min-height: 0;
`;
const PropContent = styled.div`
  width: 327px;
  display: flex;
  flex-direction: column;
  background: #f0f0f0;
  color: #1a1a1a;
  overflow: hidden;
`;
const PropScroll = styled(VScroll)`
  background: #efefef;
`;
const SectionHead = styled.div`
  height: ${(p) => p.$h || 17}px;
  flex: none;
  background: ${DARK};
  color: #fff;
  display: flex;
  align-items: center;
  ${(p) => p.$rule && "border-top: 2px solid #6b6b6b; height: 19px;"}
  font-size: 11.5px;
  margin-top: ${(p) => p.$mt || 0}px;
`;
const SectionName = styled.span`
  margin-left: 12px;
`;
const PropRow = styled.div`
  height: 20px;
  flex: none;
  display: flex;
  align-items: center;
  margin-top: ${(p) => p.$mt ?? 3}px;
  white-space: nowrap;
  position: relative;
`;
const PropLabel = styled.div`
  width: ${(p) => p.$w || 66}px;
  margin-right: ${(p) => p.$mr || 8}px;
  text-align: right;
  flex: none;
`;
const Field = styled.div`
  width: ${(p) => p.$w}px;
  height: 20px;
  flex: none;
  border: 1px solid #8a8a8a;
  background: ${(p) => (p.$disabled ? "#e0e0e0" : "#fff")};
  ${(p) => p.$disabled && "border-color: #bbb;"}
  display: flex;
  align-items: center;
  justify-content: space-between;
  padding: 0 6px 0 3px;
`;
const Swatch = styled.div`
  width: 15px;
  height: 16px;
  flex: none;
  margin-left: ${(p) => p.$ml || 0}px;
  border: 1px solid #b0b0b0;
  background: #dcdcdc;
  padding: 2px;
  &::before {
    content: "";
    display: block;
    width: 100%;
    height: 100%;
    background: ${(p) => p.$c};
  }
`;
const Box = styled.span`
  width: 13px;
  height: 13px;
  flex: none;
  margin-left: ${(p) => p.$ml || 0}px;
  border: 1px solid #444;
  background: #fff;
  display: flex;
  align-items: center;
  justify-content: center;
`;
const Radio = styled.span`
  width: 13px;
  height: 13px;
  flex: none;
  margin-left: 17px;
  border-radius: 50%;
  border: 1px solid #bbb;
  background: #fff;
  display: flex;
  align-items: center;
  justify-content: center;
  &::before {
    content: "";
    width: 7px;
    height: 7px;
    border-radius: 50%;
    background: ${(p) => (p.$on ? "#bbb" : "transparent")};
  }
`;
const CheckText = styled.span`
  margin-left: 6px;
  color: ${(p) => (p.$off ? "#a0a0a0" : "inherit")};
`;
const Spin = styled(Field)`
  padding: 0 2px 0 0;
  & > b {
    font-weight: 400;
  }
`;
const SpinArrows = styled.div`
  width: 15px;
  height: 18px;
  border-right: 1px solid #ccc;
  display: flex;
  flex-direction: column;
  align-items: center;
  justify-content: space-around;
`;
const SpinUp = styled.span`
  border-left: 3px solid transparent;
  border-right: 3px solid transparent;
  ${(p) => (p.$down ? "border-top: 3px solid #333;" : "border-bottom: 3px solid #333;")}
`;
const LineSample = styled.div`
  width: 210px;
  height: 2px;
  margin-left: 6px;
  background: #000;
`;
const EditButton = styled.div`
  width: 36px;
  height: 21px;
  margin-left: 9px;
  border: 1px solid #adadad;
  background: #e1e1e1;
  display: flex;
  align-items: center;
  justify-content: center;
`;
const FontStyleOn = styled.div`
  width: 23px;
  height: 21px;
  background: #b5d7f3;
  border: 1px solid #7fb4dd;
  display: flex;
  align-items: center;
  justify-content: center;
  flex: none;
`;
const FontStyleBtn = styled.div`
  width: 23px;
  height: 21px;
  display: flex;
  align-items: center;
  justify-content: center;
  flex: none;
`;
const CommentBox = styled.div`
  position: relative;
  width: 243px;
  height: 66px;
  margin: 2px 0 0 75px;
  flex: none;
  background: #e4e4e4;
  border: 1px solid #cfcfcf;
  color: #707070;
  font-weight: 700;
  text-align: center;
  padding: 5px 16px 0 0;
  font-size: 10.5px;
  line-height: 13px;
`;
const CommentScroll = styled.div`
  position: absolute;
  top: 0;
  right: 0;
  bottom: 0;
  width: 15px;
  background: #efefef;
  display: flex;
  flex-direction: column;
  align-items: center;
  justify-content: space-between;
  padding: 5px 0;
`;
const Replies = styled.a`
  margin-left: auto;
  margin-right: 15px;
  color: #0000ee;
  text-decoration: underline;
`;
const ChevronUpGlyph = () => (
  <Svg s={11} h={7} vb="0 0 11 7">
    <path d="M1 6l4.5-4.5L10 6" fill="none" stroke="#555" strokeWidth="1.5" />
  </Svg>
);
const ChevronDownGlyph = () => (
  <Svg s={11} h={7} vb="0 0 11 7">
    <path d="M1 1l4.5 4.5L10 1" fill="none" stroke="#555" strokeWidth="1.5" />
  </Svg>
);
const Check = () => (
  <Svg s={11} vb="0 0 11 11">
    <path d="M1.5 5.5l3 3 5-7" fill="none" stroke="#333" strokeWidth="1.2" />
  </Svg>
);

/* ---------- content ---------- */
const menus = [["File", 46], ["Edit", 46], ["View", 52], ["Document", 84], ["Form", 54], ["Markup", 68]];
const tools1 = [["New", 51, 19, 6], ["Open", 51], ["Save", 51, 19, 6], ["Print", 51], ["E-mail", 51, 19, 6], ["Studio", 51]];
const tools2 = [
  ["Measure Tool", 70], ["Calibrate", 56], ["Length", 44], ["Polylength", 60], ["Perimeter", 56], ["Area", 46],
  ["Volume", 48], ["Cutout", 52, 15, 3], ["Dynamic Fill", 68], ["Count", 44], ["Diameter", 56], ["Angle", 42], ["Radius", 54, 15, 3],
];
const sets = ["Bath", "Casework", "Demolition", "Doors"];
const setsAfter = ["Kitchen", "Lighting", "Windows"];
const MiniFoot = ({ kind }) => {
  const art = {
    ceiling: <Svg s={10} vb="0 0 10 10"><path d="M0 10V5a5 5 0 0 1 10 0v5z" fill="#f0200c" /><circle cx="5" cy="6" r="2.6" fill="#f7a21a" /></Svg>,
    floor: <Svg s={10} vb="0 0 10 10"><rect x="0" y="1" width="10" height="8" rx="2" fill="#ff94c8" /></Svg>,
    strip: <Svg s={14} h={4} vb="0 0 14 4"><path d="M0 3l3-2 2 2 3-2 2 2 3-2" stroke="#f2c81a" fill="none" /></Svg>,
    trim: <Svg s={14} h={4} vb="0 0 14 4"><path d="M1 2h12" stroke="#f010d0" strokeWidth="1.5" /></Svg>,
    wall: <Svg s={18} h={6} vb="0 0 18 6"><path d="M3 3h12" stroke="#8a1a1a" strokeWidth="2" /><circle cx="3" cy="3" r="2.6" fill="#8a1a1a" /><circle cx="15" cy="3" r="2.6" fill="#8a1a1a" /></Svg>,
  };
  return art[kind];
};
const OutlineShape = ({ poly }) => (
  <Svg s={18} h={18} vb="0 0 18 18">
    {poly ? (
      <path d="M2 14L4 8l9-5 3 0v12z" fill="none" stroke={PURPLE} strokeWidth="1" />
    ) : (
      <path d="M2 15V8l7-6h7v13z" fill="none" stroke={PURPLE} strokeWidth="1" />
    )}
  </Svg>
);
const setRows = [
  ["Ceiling Finish", "", "Clg Finish Type ?", <><FtIcon s={17} /><MiniFoot kind="ceiling" /></>],
  ["Floor Finish", "", "Floor Finish Type ?", <><FtIcon s={17} /><MiniFoot kind="floor" /></>],
  ["Room No.", "", "", <Svg s={26} vb="0 0 26 26"><rect x="1" y="1" width="20" height="20" fill="none" stroke="#e8151a" /><rect x="11" y="11" width="14" height="13" rx="3" fill="#6e7173" /><path d="M19 13v9l-5-4.500z" fill="#111" /></Svg>],
  ["Transition Strip", "", "Transition Type ?", <><OutlineShape poly /><MiniFoot kind="strip" /></>],
  ["Trim Finish", "", "Trim Type ?", <><OutlineShape /><MiniFoot kind="trim" /></>],
  ["Wall Finish", "", "Wall Finish Type ?", <><OutlineShape /><MiniFoot kind="wall" /></>],
  ["Suggest a Zen-Revu Tool!", "© 2017 ZenTek Consultants", "", <Svg s={26} vb="0 0 26 26"><rect x="11" y="9" width="14" height="14" rx="3" fill="#6e7173" /><path d="M21 11l-6 6h3l-2 4 6-6h-3z" fill="#111" /></Svg>],
];
const dropItems = ["Bamboo", "Carpet", "Cork", "Hard Wood", "Laminate", "Marble", "Sheet Vinyl", "Slate", "Stone", "Terrazzo",
  "Tile - Ceramic (12x12)", "Tile - Ceramic (18x18)", "Tile - Ceramic (24x24)", "Tile - Ceramic (4x4)", "Tile - Ceramic (8x8)", "Tile - Mosaic", "VCT"];
const columns = ["Subject", "Label", "Length", "Area", "Wall Area", "Volume", "Count", "Comments", "Wall Finish", "Ceiling Finish", "Trim Finish", "", ""];
const Tri = ({ up, c = "#6e6e6e" }) => (
  <Svg s={10} h={9} vb="0 0 10 9"><path d={up ? "M5 0l5 9H0z" : "M0 0h10L5 9z"} fill={c} /></Svg>
);
const AlignIcon = ({ mode }) => (
  <Svg s={18} h={14} vb="0 0 18 14">
    {[1, 4, 7, 10, 13].map((y, i) => {
      const w = i % 2 ? 11 : 17;
      const x = mode === "c" ? (18 - w) / 2 : mode === "r" ? 18 - w : 0;
      return <rect key={y} x={x} y={y - 1} width={w} height="1" fill="#8b8b8b" />;
    })}
  </Svg>
);
const Funnel = () => <Svg s={18} h={22} vb="0 0 18 22"><path d="M0 1h18l-7 11v9l-4-3v-6z" fill="#2d8fe0" /></Svg>;
const BlueTile = ({ kind }) => (
  <Svg s={18} vb="0 0 18 18">
    <rect x="1" y="1" width="15" height="16" fill="#fff" />
    {kind === "right" && <path d="M1 1h6v16H1zM6 9h8M11 6l3 3-3 3" fill="#0a7fd9" stroke="#0a7fd9" strokeWidth="1.4" />}
    {kind === "down" && <path d="M1 1h15v6H1zM8 7v8M5 12l3 3 3-3" fill="#0a7fd9" stroke="#0a7fd9" strokeWidth="1.4" />}
    {kind === "cross" && <path d="M8 3v12M3 9h10M6 5l2-2 2 2M6 13l2 2 2-2M5 7L3 9l2 2M11 7l2 2-2 2" fill="none" stroke="#0a7fd9" strokeWidth="1.3" />}
    {kind === "rows" && <path d="M1 1h15v6H1zM1 12h15v5H1zM4 9.500h9" fill="#0a7fd9" stroke="#0a7fd9" />}
  </Svg>
);

const SetHeader = ({ name }) => (
  <SetRow>
    <Arrow />
    <SetName>Zen-Revu Interiors: {name}</SetName>
    <SetIcons><Lock /><Gear s={14} /><Arrow $ml={2} /></SetIcons>
  </SetRow>
);

const App = () => (
  <Page>
    <GlobalStyle />
    <AppWindow>
      <MenuBar>
        <Logo>Revu</Logo>
        {menus.map(([m, w]) => <MenuItem key={m} $w={w}>{m}</MenuItem>)}
        <MenuItem $w={72} $active>Measure</MenuItem>
        <MenuItem $w={72}>Window</MenuItem>
        <MenuItem $w={50}>Help</MenuItem>
        <WindowControls>
          <Svg s={10} h={6} vb="0 0 10 6"><path d="M5 0l5 6H0z" fill="#fff" /></Svg>
          <NavGap $w={17} />
          <Svg s={13} h={5} vb="0 0 13 5"><rect width="13" height="4" y="1" fill="#e6e6e6" /></Svg>
          <NavGap $w={11} />
          <Svg s={13} vb="0 0 13 13"><path d="M4 0h9v8H9v5H0V4h4z" fill="#fff" /><rect x="2" y="7" width="5" height="4" fill="#000" /></Svg>
          <NavGap $w={13} />
          <Svg s={11} vb="0 0 11 11"><path d="M1 1l9 9M10 1l-9 9" stroke="#fff" strokeWidth="2.4" /></Svg>
        </WindowControls>
      </MenuBar>
      <Ribbon>
        <RibbonRow>
          <RibbonLead>
            <Svg s={18} h={14} vb="0 0 18 14"><path d="M0 0h18L9 14z" fill="#f47b20" /><path d="M0 0h18L9 5z" fill="#fb9a3a" /></Svg>
          </RibbonLead>
          {tools1.map(([n, w, c, shift]) => (
            <RibbonTool key={n} $w={w}>
              <RibbonIcon $shift={shift}>{ribbonIcons[n]}</RibbonIcon>
              {c && <Caret $x={c - 3} />}
              <RibbonLabel>{n}</RibbonLabel>
            </RibbonTool>
          ))}
          <RibbonGap $w={46.5} />
          {tools2.map(([n, w, c, shift]) => (
            <RibbonTool key={n} $w={w}>
              <RibbonIcon $shift={shift}>{ribbonIcons[n]}</RibbonIcon>
              {c && <Caret $x={c} />}
              <RibbonLabel>{n}</RibbonLabel>
            </RibbonTool>
          ))}
          <RibbonSpring />
          <RibbonTool $w={52}><RibbonIcon $shift={3}>{ribbonIcons.View}</RibbonIcon><Caret $x={15} /><RibbonLabel>View</RibbonLabel></RibbonTool>
          <RibbonTool $w={52}><RibbonIcon $shift={2}>{ribbonIcons.Settings}</RibbonIcon><Caret $x={17} /><RibbonLabel>Settings</RibbonLabel></RibbonTool>
          <RibbonGap $w={4} />
        </RibbonRow>
        <ToolRow $h={24} $mt={7}>
          <Grip />
          <Combo $w={100}>Helvetica<ComboButton /></Combo>
          <Combo $w={40} $ml={2}>8<ComboButton /></Combo>
          <Sep $w={9} />
          <Slot $w={30}>
            <Svg s={17} h={20} vb="0 0 17 20"><path d="M8.500 1L2 15h2l1.500-4h6l1.500 4h2zM6 9.500l2.500-6 2.500 6z" fill="#bdbdbd" /><rect y="16" width="17" height="4" fill="#000" /></Svg>
            <MiniCaret />
          </Slot>
          <Sep />
          <BoldButton>B</BoldButton>
          <Slot $w={24}><StyleGlyph $italic>I</StyleGlyph></Slot>
          <Slot $w={24}><StyleGlyph $underline>U</StyleGlyph></Slot>
          <Sep $w={6} />
          <Slot $w={24}><AlignIcon mode="l" /></Slot>
          <Slot $w={24}><AlignIcon mode="c" /></Slot>
          <Slot $w={24}><AlignIcon mode="r" /></Slot>
          <Grip $w={14} $center />
          {Array.from({ length: 8 }, (_, i) => (
            <Slot key={i} $w={33}><Chest /><MiniCaret /></Slot>
          ))}
        </ToolRow>
        <ToolRow $h={25}>
          <Grip />
          <Slot $w={22}><Svg s={20} vb="0 0 20 20"><path d="M4 3v7h7M4 10c3-5 13-5 13 3 0 2-1 4-3 5" fill="none" stroke="#f08a24" strokeWidth="2.2" /></Svg></Slot>
          <Slot $w={14}><MiniCaret /></Slot>
          <Slot $w={20}><Svg s={20} vb="0 0 20 20"><path d="M16 3v7H9M16 10c-3-5-13-5-13 3 0 2 1 4 3 5" fill="none" stroke="#7f7f7f" strokeWidth="2.2" /></Svg></Slot>
          <Slot $w={18}><MiniCaret $c="#6a6a6a" /></Slot>
          <Slot $w={21}><Svg s={20} vb="0 0 20 20"><path d="M17 1L7 12M6 3l12 11" stroke="#c9c9c9" strokeWidth="2" /><circle cx="5" cy="15" r="3" fill="none" stroke="#f08a24" strokeWidth="1.8" /><circle cx="12" cy="17" r="2.4" fill="none" stroke="#f08a24" strokeWidth="1.8" /></Svg></Slot>
          <Slot $w={24}><Svg s={18} h={20} vb="0 0 18 20"><path d="M0 0h9l3 3v13H0z" fill="#fff" /><path d="M5 4h9l3 3v13H5z" fill="#fff" stroke="#202020" /></Svg></Slot>
          <Slot $w={24}><Svg s={18} h={20} vb="0 0 18 20"><path d="M1 3h11v15H1z" fill="#7a5a34" /><rect x="4" y="0" width="5" height="5" fill="#c9c9c9" /><path d="M6 7h7l4 4v9H6z" fill="#fff" /></Svg></Slot>
          <Slot $w={23}><Svg s={20} vb="0 0 20 20"><path d="M18 1L9 9l3 3 7-9z" fill="#6b4a2a" /><path d="M3 10l5-3 5 5-3 5z" fill="#c9c9c9" /><path d="M3 10l7 7-4 3-5-6z" fill="#d8262a" /></Svg></Slot>
          <Slot $w={25}><Svg s={14} vb="0 0 14 14"><path d="M2 2l10 10M12 2L2 12" stroke="#e81c1c" strokeWidth="3.4" /></Svg></Slot>
          <Slot $w={24}><Svg s={20} vb="0 0 20 20"><rect x="2" y="7" width="12" height="11" rx="2" transform="rotate(-15 8 12)" fill="#d9bf52" stroke="#333" /><ellipse cx="13" cy="11" rx="3" ry="6" transform="rotate(-15 13 11)" fill="#f0f0f0" stroke="#555" /><path d="M11 5l5-4" stroke="#ddd" strokeWidth="2" /></Svg></Slot>
          <Slot $w={24}><Svg s={20} h={18} vb="0 0 20 18"><path d="M1 3h5l1-2h6l1 2h5v14H1z" fill="#8c8c8c" /><circle cx="11" cy="10" r="5" fill="#6ea7d8" stroke="#555" /></Svg></Slot>
        </ToolRow>
      </Ribbon>
      <Workspace>
        <MainColumn>
          <TopArea>
            <LeftPanel>
              <PanelTabs>
                <PanelTab>
                  <Svg s={20} vb="0 0 20 20"><circle cx="9" cy="11" r="8" fill="#f18a1d" /><circle cx="9" cy="11" r="4" fill="none" stroke="#fff" strokeWidth="1.5" /><path d="M15 2l4-1v14l-3 3z" fill="#2e86c8" /></Svg>
                </PanelTab>
                <PanelTab><Svg s={18} vb="0 0 18 18"><path d="M8 1l8 2-5 9-1 5-1-4-6 4 4-8z" fill="#1b74c4" /></Svg></PanelTab>
                <PanelTab><Svg s={18} vb="0 0 18 18"><rect width="8" height="8" fill="#fff" /><rect x="10" width="8" height="8" fill="#fff" /><rect y="10" width="8" height="8" fill="#fff" /><rect x="10" y="10" width="8" height="8" fill="#fff" /><path d="M0 0h18v18H0z" fill="none" stroke="#1b74c4" strokeWidth=".6" /></Svg></PanelTab>
                <PanelTab $active><Chest square={false} /></PanelTab>
                <PanelTab><Svg s={20} h={17} vb="0 0 20 17"><rect x="4" y="3" width="15" height="13" fill="#1b74c4" /><rect x="1" y="1" width="15" height="12" fill="#d6ebfa" stroke="#1b74c4" /></Svg></PanelTab>
                <PanelTab><Svg s={16} vb="0 0 16 16"><path d="M1 5l8-4 6 3-8 4zM1 9l8-4 6 3-8 4zM1 13l8-4 6 3-8 4z" fill="#55697a" stroke="#8a9aa8" strokeWidth=".5" /></Svg></PanelTab>
              </PanelTabs>
              <ToolRow $h={29}>
                <Svg s={13} h={16} vb="0 0 13 16"><path d="M0 .5h12.500v15H0M0 8h9" fill="none" stroke="#777" strokeWidth="1.4" /></Svg>
                <NavGap $w={8} />
                <Svg s={16} vb="0 0 16 16"><rect x=".7" y=".7" width="14.600" height="14.600" fill="none" stroke={BLUE} strokeWidth="1.4" /><path d="M8 3.500v9M3.500 8h9" stroke={BLUE} strokeWidth="1.8" /></Svg>
                <Sep $w={14} $h={17} />
                <Svg s={18} vb="0 0 18 18"><path d="M8 1c3 4 6 6 6 10a6 6 0 0 1-12 0c0-4 3-6 6-10z" fill="#7f7f7f" /><path d="M11 11l6 6M15 11l-5 6" stroke="#777" /></Svg>
                <NavGap $w={7} />
                <Svg s={16} vb="0 0 16 16"><rect x=".7" y=".7" width="14.600" height="14.600" fill="none" stroke="#777" strokeWidth="1.2" /><path d="M4 12l8-8" stroke="#777" strokeWidth="1.6" /></Svg>
                <Sep $w={14} $h={17} />
                <Gear s={18} c="#3b8fd6" />
                <NavGap $w={5} />
                <MiniCaret />
              </ToolRow>
              {sets.map((s) => <SetHeader key={s} name={s} />)}
              <SetRow $open>
                <Arrow $down />
                <SetName $down>Zen-Revu Interiors: Finishes</SetName>
                <SetIcons><Lock /><Gear s={14} /></SetIcons>
              </SetRow>
              <SetTable>
                <SetCell />
                <SetCell $head>Subject</SetCell>
                <SetCell $head>Comment</SetCell>
                <SetCell $head $last>Label</SetCell>
                {setRows.map(([subject, comment, label, icon]) => (
                  <React.Fragment key={subject}>
                    <SetIconCell>{icon}</SetIconCell>
                    <SetCell>{subject}</SetCell>
                    <SetCell>{comment}</SetCell>
                    <SetCell $last>{label}</SetCell>
                  </React.Fragment>
                ))}
              </SetTable>
              <TableGap />
              {setsAfter.map((s) => <SetHeader key={s} name={s} />)}
            </LeftPanel>
            <VSplit />
            <DocArea>
              <EdgeKnob />
              <EdgeKnob $right />
              <DocTabs>
                <DocTab>
                  Floor Plan*
                  <Svg s={11} vb="0 0 11 11"><circle cx="5.500" cy="5.500" r="5" fill="none" stroke="#9a9a9a" /><path d="M3.500 3.500l4 4M7.500 3.500l-4 4" stroke="#9a9a9a" /></Svg>
                </DocTab>
                <DocActions>
                  <Svg s={14} h={10} vb="0 0 14 10"><path d="M0 0h14L7 10z" fill="#9a9a9a" /></Svg>
                  <NavGap $w={9} />
                  <Svg s={13} vb="0 0 13 13"><path d="M1 1l11 11M12 1L1 12" stroke={BLUE} strokeWidth="3.200" /></Svg>
                  <NavGap $w={9} />
                  <RedBox><Svg s={10} h={6} vb="0 0 10 6"><path d="M0 0h7l3 3-3 3H0z" fill="#d0181c" /></Svg></RedBox>
                </DocActions>
              </DocTabs>
              <CanvasRow>
                <FloorPlan />
                <VScroll>
                  <ScrollArrow><ChevronUpGlyph /></ScrollArrow>
                  <ScrollThumb $top={311} $h={102} />
                  <ScrollArrow $down><ChevronDownGlyph /></ScrollArrow>
                </VScroll>
              </CanvasRow>
              <HScrollRow>
                <HScroll>
                  <HThumb />
                  <Svg s={7} h={11} vb="0 0 7 11"><path d="M6 1L1.500 5.500 6 10" fill="none" stroke="#555" strokeWidth="1.5" /></Svg>
                  <Svg s={7} h={11} vb="0 0 7 11"><path d="M1 1l4.500 4.500L1 10" fill="none" stroke="#555" strokeWidth="1.5" /></Svg>
                </HScroll>
                <PageCorner><Svg s={13} h={14} vb="0 0 13 14"><path d="M1 0h6l4 4v10H1z" fill="#fff" /><path d="M8 11h5M10.500 8.500v5" stroke="#3fae3f" strokeWidth="1.6" /></Svg></PageCorner>
              </HScrollRow>
              <NavBar>
                <Slot $w={22}><Svg s={16} h={18} vb="0 0 16 18"><rect width="16" height="18" fill="#6a6a6a" /><path d="M4 5l8 8M12 5l-8 8" stroke="#bdbdbd" strokeWidth="1.6" /></Svg></Slot>
                <NavGap $w={2} />
                <Slot $w={24}><BlueTile kind="right" /></Slot>
                <Slot $w={22}><BlueTile kind="down" /></Slot>
                <NavGap $w={25} />
                <Slot $w={24}><BlueTile kind="cross" /></Slot>
                <Slot $w={24}><BlueTile kind="rows" /></Slot>
                <NavGap $w={100} />
                <HandButton>
                  <Svg s={16} h={18} vb="0 0 16 18"><path d="M4 10V4a1 1 0 0 1 2 0V2a1 1 0 0 1 2 0v1a1 1 0 0 1 2 0v1a1 1 0 0 1 2 0v8l-2 5H5L1 11c0-2 2-2 3-1z" fill="#fff" stroke="#333" strokeWidth=".5" /></Svg>
                </HandButton>
                <Slot $w={24}><Svg s={11} h={17} vb="0 0 11 17"><path d="M1 0v14l3-3 3 6 2-1-3-6h4z" fill="#fff" stroke="#000" strokeWidth=".5" /></Svg></Slot>
                <Slot $w={24}><Svg s={20} vb="0 0 20 20"><circle cx="7" cy="7" r="6" fill="#d4e4ef" stroke="#8ea6b8" /><path d="M11 11l7 7" stroke="#3b8fd6" strokeWidth="3.500" /></Svg></Slot>
                <Slot $w={24} $c={BLUE} $fs={17}>IA</Slot>
                <NavGap $w={2} />
                <Combo $w={75} $h={18}>164.80%<ComboButton /></Combo>
                <NavGap $w={25} />
                <Slot $w={24}><Svg s={12} h={16} vb="0 0 12 16"><rect width="2.500" height="16" fill="#6e6e6e" /><path d="M12 0v16L4 8z" fill="#6e6e6e" /></Svg></Slot>
                <Slot $w={24}><Svg s={9} h={16} vb="0 0 9 16"><path d="M9 0v16L0 8z" fill="#6e6e6e" /></Svg></Slot>
                <ModelBox>Model (1 of 1)</ModelBox>
                <RibbonSpring />
                <Slot $w={24}><Svg s={18} h={22} vb="0 0 18 22"><circle cx="9" cy="6" r="5" fill="#e5b9a0" /><path d="M1 22c0-8 4-10 8-10s8 2 8 10z" fill="#2a7fd0" /><path d="M7 12h4l-2 7z" fill="#fff" /></Svg></Slot>
                <Slot $w={10}><MiniCaret /></Slot>
                <NavGap $w={2} />
                <Slot $w={22}><Svg s={14} h={22} vb="0 0 14 22"><path d="M7 0a7 7 0 0 1 4 12.500V15H3v-2.500A7 7 0 0 1 7 0z" fill="#f4d72a" /><rect x="4" y="16" width="6" height="4" fill="#9a9a9a" /></Svg></Slot>
                <NavGap $w={2} />
                <Slot $w={10}><MiniCaret /></Slot>
                <NavGap $w={2} />
                <Slot $w={22}><Svg s={14} h={20} vb="0 0 14 20"><path d="M0 0h9l5 5v15H0z" fill="#fff" /><text x="3" y="16" fontSize="11" fontWeight="700" fill={BLUE} fontFamily="Liberation Sans">P</text></Svg></Slot>
                <NavGap $w={2} />
                <Slot $w={22}><Svg s={18} h={20} vb="0 0 18 20"><path d="M11 8V5a3.500 3.500 0 0 1 7 0" fill="none" stroke="#e3c13c" strokeWidth="2" /><rect x="0" y="8" width="13" height="11" fill="#e3b62c" /></Svg></Slot>
                <NavGap $w={2} />
                <Slot $w={10}><MiniCaret /></Slot>
                <NavGap $w={4} />
              </NavBar>
            </DocArea>
            <VSplit />
          </TopArea>
          <HSplit>
            <Knob><MiniCaret /></Knob>
          </HSplit>
          <ListPanel>
            <ListStrip>
              <StripTop><Svg s={14} h={18} vb="0 0 14 18"><path d="M12 1L2 17" stroke="#e8262a" strokeWidth="3.400" /></Svg></StripTop>
              <StripRest>
                <Svg s={16} vb="0 0 16 16"><circle cx="8" cy="8" r="8" fill="#2a5f8a" /><circle cx="8" cy="8" r="4.500" fill="#b98b3a" /></Svg>
              </StripRest>
            </ListStrip>
            <ListMain>
              <ToolRow $h={29}>
                <Slot $w={26} $c={BLUE} $fs={20}>+</Slot>
                <Slot $w={22} $c={BLUE} $fs={20}>−</Slot>
                <Sep $w={8} />
                <Slot $w={22}><Tri up /></Slot>
                <Slot $w={26}><Tri /></Slot>
                <Sep $w={6} />
                <Slot $w={22}><Funnel /></Slot>
                <Slot $w={32}>Filter</Slot>
                <Slot $w={26}><Svg s={18} h={23} vb="0 0 18 23"><ellipse cx="9" cy="3" rx="8" ry="2.500" fill="#999" /><path d="M1 4l2 18h12l2-18z" fill="#6e6e6e" /><path d="M6 6l1 15M12 6l-1 15" stroke="#8a8a8a" /></Svg></Slot>
                <Slot $w={26}><Svg s={18} vb="0 0 18 18"><circle cx="9" cy="9" r="7.500" fill="none" stroke="#e8262a" strokeWidth="1.600" /><path d="M3 16L15 2" stroke="#e8262a" strokeWidth="1.600" /></Svg></Slot>
                <SearchBox>
                  <Svg s={10} vb="0 0 10 10"><circle cx="3.500" cy="3.500" r="2.800" fill="none" stroke="#444" strokeWidth="1.200" /><path d="M6 6l4 4" stroke="#444" strokeWidth="1.600" /></Svg>
                  <span>Search</span>
                  <Svg s={9} vb="0 0 9 9"><path d="M1 1l7 7M8 1L1 8" stroke="#777" strokeWidth="2" /></Svg>
                </SearchBox>
                <Sep $w={6} />
                <Slot $w={22}><Svg s={18} vb="0 0 18 18"><rect y="1" width="18" height="17" fill="#fff" /><rect y="1" width="18" height="4" fill={BLUE} /><path d="M1 5v13M5 5v13M9 5v13M13 5v13M17 5v13" stroke={BLUE} strokeWidth="1.400" /></Svg></Slot>
                <Slot $w={54}>Columns</Slot>
                <Slot $w={10}><MiniCaret /></Slot>
                <NavGap $w={1} />
                <Slot $w={22}><Gear s={17} /></Slot>
                <Sep $w={12} />
                <Slot $w={16}><Svg s={13} vb="0 0 13 13"><path d="M2 1l9 11M11 1L2 12" stroke="#e8262a" strokeWidth="3" /></Svg></Slot>
                <NavGap $w={4} />
                <Slot $w={22}><Svg s={18} h={16} vb="0 0 18 16"><path d="M2 0v8h8V4l7 6-7 6v-4H0V0z" fill="#7cb33c" /></Svg></Slot>
                <NavGap $w={2} />
                <Slot $w={20}><Svg s={11} h={22} vb="0 0 11 22"><rect width="11" height="22" rx="3" fill="#333" stroke="#aaa" strokeWidth=".5" /><circle cx="5.500" cy="5" r="2.200" fill="#e8262a" /><circle cx="5.500" cy="11" r="2.200" fill="#f0d020" /><circle cx="5.500" cy="17" r="2.200" fill="#5fc03a" /></Svg></Slot>
                <Slot $w={11}><MiniCaret /></Slot>
                <NavGap $w={2} />
                <Slot $w={22}><Gear s={17} /></Slot>
                <NavGap $w={2} />
                <Slot $w={20}><Svg s={16} h={14} vb="0 0 16 14"><path d="M1 7l5 5L15 1" fill="none" stroke="#f08a24" strokeWidth="2.800" /></Svg></Slot>
                <Slot $w={10}><MiniCaret /></Slot>
                <Sep $w={10} />
                <Slot $w={22}><Svg s={18} h={22} vb="0 0 18 22"><ellipse cx="8" cy="3" rx="7" ry="3" fill="#4ca3e4" /><rect x="1" y="3" width="14" height="15" fill="#2a7fc8" /><path d="M8 14h10l-5 8z" fill="#7cb33c" /></Svg></Slot>
                <Slot $w={22}><Svg s={16} h={22} vb="0 0 16 22"><path d="M0 0h8l5 5v15H0z" fill="#fff" /><path d="M6 12h5V9l5 4-5 4v-3H6z" fill="#f08a24" /></Svg></Slot>
                <Slot $w={10}><MiniCaret /></Slot>
                <NavGap $w={2} />
                <Slot $w={20}><Svg s={15} h={14} vb="0 0 15 14"><path d="M0 1h2v2H0zM0 6h2v2H0zM0 11h2v2H0zM4 1h11v2H4zM4 6h11v2H4zM4 11h11v2H4z" fill={BLUE} /></Svg></Slot>
                <Slot $w={56}>Summary</Slot>
                <NavGap $w={3} />
                <Slot $w={10}><MiniCaret /></Slot>
              </ToolRow>
              <Row $h={16} $header $bold>
                {columns.map((c, i) => <Cell key={i} $open>{c}</Cell>)}
              </Row>
              <Row $h={18} $bold>
                <Cell $pl={13}><Arrow $down $ml={0} /><SectionName>(1)</SectionName></Cell>
                <Cell />
                <Cell $right>285.80 ft' in"</Cell>
                <Cell $right>2,266 sf</Cell>
                <Cell $right>143 sf</Cell>
                <Cell>1,133 c...</Cell>
                {[0, 1, 2, 3, 4, 5, 6].map((i) => <Cell key={i} />)}
              </Row>
              <Row $h={22} $sel>
                <Cell $open $pl={59}><FtIcon s={16} /><CheckText>Floor Finish</CheckText></Cell>
                <Cell>Floor Finish Type B</Cell>
                <Cell $right>285.80 ft' in"</Cell>
                <Cell $right>2,266 sf</Cell>
                <Cell $right>143 sf</Cell>
                <Cell $right>1,133 cu ft</Cell>
                <Cell />
                <Cell>2,266 sf</Cell>
                <Cell /><Cell /><Cell />
                <EditCell $open>
                  <Chevron />
                  <DropList>
                    {dropItems.map((d) => <DropItem key={d} $sel={d === "Marble"}>{d}</DropItem>)}
                  </DropList>
                </EditCell>
                <div />
              </Row>
              <ListBody>
                <Row $h={17}>
                  {columns.map((c, i) => <Cell key={i} />)}
                </Row>
              </ListBody>
            </ListMain>
            <VSplit />
          </ListPanel>
        </MainColumn>
        <RightPanel>
          <PanelTabs $pad={5}>
            <PanelTab $active><Gear s={18} /></PanelTab>
            <PanelTab><Svg s={20} h={12} vb="0 0 20 12"><circle cx="5" cy="7" r="5" fill="#5f8a3a" /><circle cx="15" cy="7" r="5" fill="#5f8a3a" /><circle cx="5" cy="7" r="2" fill="#bfd2ae" /><circle cx="15" cy="7" r="2" fill="#bfd2ae" /></Svg></PanelTab>
            <PanelTab><Svg s={20} vb="0 0 20 20"><path d="M1 16L16 1l3 3L4 19z" fill="#efeaf6" stroke={PURPLE} /></Svg></PanelTab>
            <PanelTab><Svg s={20} h={16} vb="0 0 20 16"><path d="M0 8L12 0l8 4v8l-6 4V10h-4v4H6V10z" fill="#1b80d4" /></Svg></PanelTab>
            <PanelTab><Svg s={15} h={20} vb="0 0 15 20"><path d="M7.500 20C4 14 0 11 0 7a7.500 7.500 0 0 1 15 0c0 4-4 7-7.500 13z" fill="#3f9ae0" /><circle cx="7.500" cy="7" r="2.500" fill="#fff" /></Svg></PanelTab>
          </PanelTabs>
          <PropTitle><FtIcon s={16} />Area Measurement</PropTitle>
          <PropScrollArea>
            <PropContent>
              <SectionHead $h={18}><Arrow $down $ml={11} /><SectionName>General</SectionName></SectionHead>
              <PropRow $mt={6}><PropLabel>Author:</PropLabel><Field $w={245}>james</Field></PropRow>
              <PropRow><PropLabel>Subject:</PropLabel><Field $w={245}>Floor Finish</Field></PropRow>
              <PropRow><PropLabel>Label:</PropLabel><Field $w={245}>Floor Finish Type B</Field></PropRow>
              <CommentBox>
                Floor Finish Type B<br />2,266 sf
                <CommentScroll><ChevronUpGlyph /><ChevronDownGlyph /></CommentScroll>
              </CommentBox>
              <PropRow $mt={5}><PropLabel>Modified:</PropLabel>9/26/2017 5:15:52 PM</PropRow>
              <PropRow $mt={-1}><PropLabel />
                <Box /><CheckText>Lock</CheckText>
                <Replies>(0) Replies</Replies>
              </PropRow>
              <SectionHead $rule $mt={4}><Arrow $down $ml={11} /><SectionName>Appearance</SectionName></SectionHead>
              <PropRow $mt={6}><PropLabel>Color:</PropLabel><Swatch $c="#ff94c8" $ml={1} /></PropRow>
              <PropRow $mt={4}><PropLabel>Fill Color:</PropLabel><Swatch $c="#ff94c8" $ml={1} /><Box $ml={11}><Check /></Box><CheckText>Highlight</CheckText></PropRow>
              <PropRow $mt={4}><PropLabel>Hatch:</PropLabel><Field $w={223}>&nbsp;Diagonal Down<Chevron /></Field><Swatch $c="#ff00ff" $ml={5} /></PropRow>
              {[["Scale:", "100"], ["Opacity:", "100"], ["Fill Opacity:", "100"], ["Line Width:", "2.00"]].map(([l, v], i) => (
                <PropRow key={l} $mt={i === 3 ? 2 : 3}>
                  <PropLabel>{l}</PropLabel>
                  <Spin $w={84}><SpinArrows><SpinUp /><SpinUp $down /></SpinArrows><b>{v}</b></Spin>
                </PropRow>
              ))}
              <PropRow $mt={4}><PropLabel>Style:</PropLabel><Field $w={245}><LineSample /><Chevron /></Field></PropRow>
              <PropRow><PropLabel /><Box /><CheckText>Show Segment Values</CheckText></PropRow>
              <PropRow><PropLabel /><Radio $on /><CheckText $off>Align to Segment</CheckText></PropRow>
              <PropRow $mt={2}><PropLabel /><Radio /><CheckText $off>Align Horizontally</CheckText></PropRow>
              <PropRow $mt={5}><PropLabel /><Box><Check /></Box><CheckText>Show Caption</CheckText><EditButton>Edit</EditButton></PropRow>
              <PropRow $mt={2}><PropLabel /><Box /><CheckText>Show Centroid</CheckText></PropRow>
              <PropRow $mt={4}><PropLabel>Font:</PropLabel><Field $w={260}>&nbsp;Helvetica</Field></PropRow>
              <PropRow $mt={5}><PropLabel>Font Size:</PropLabel><Field $w={260}>8</Field></PropRow>
              <PropRow><PropLabel>Text Color:</PropLabel><Swatch $c="#000" $ml={1} /></PropRow>
              <PropRow $mt={6}>
                <PropLabel>Font Style:</PropLabel>
                <FontStyleOn><StyleGlyph>B</StyleGlyph></FontStyleOn>
                <FontStyleBtn><StyleGlyph $italic>I</StyleGlyph></FontStyleBtn>
                <FontStyleBtn><StyleGlyph $underline>U</StyleGlyph></FontStyleBtn>
                <FontStyleBtn><StyleGlyph $strike>T</StyleGlyph></FontStyleBtn>
              </PropRow>
              <SectionHead $rule $mt={10}><Arrow $ml={13} /><SectionName>Custom</SectionName></SectionHead>
              <PropRow $mt={11}><PropLabel $w={89} $mr={10}>Wall Finish:</PropLabel><Field $w={217} $disabled>&nbsp;<Chevron /></Field></PropRow>
              <PropRow $mt={11}><PropLabel $w={89} $mr={10}>Ceiling Finish:</PropLabel><Field $w={217} $disabled>&nbsp;<Chevron /></Field></PropRow>
              <PropRow $mt={10}><PropLabel $w={89} $mr={10}>Trim Finish:</PropLabel><Field $w={217} $disabled>&nbsp;<Chevron /></Field></PropRow>
            </PropContent>
            <PropScroll>
              <ScrollArrow><ChevronUpGlyph /></ScrollArrow>
              <ScrollThumb $top={18} $h={513} />
              <ScrollArrow $down />
            </PropScroll>
          </PropScrollArea>
        </RightPanel>
      </Workspace>
    </AppWindow>
  </Page>
);

export default App;
